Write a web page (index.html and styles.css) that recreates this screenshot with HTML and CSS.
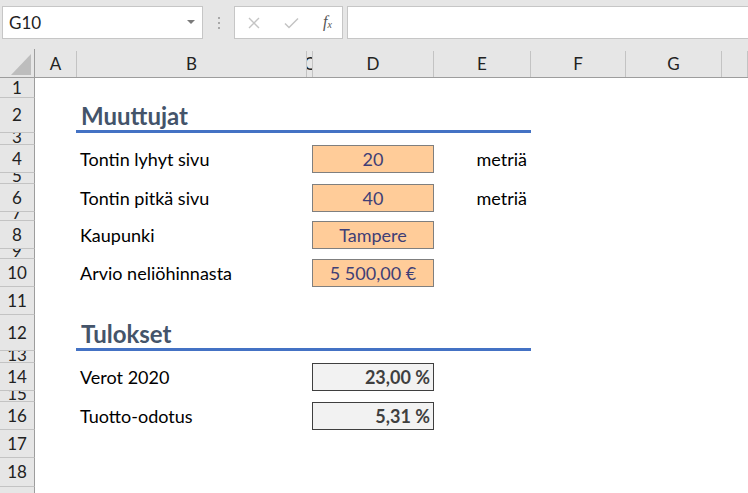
FILE: index.html
```html
<!DOCTYPE html>
<html lang="fi">
<head>
  <meta charset="UTF-8">
  <meta name="viewport" content="width=device-width, initial-scale=1.0">
  <title>Laskuri</title>
  <link rel="stylesheet" href="styles.css">
</head>
<body>
  <div class="toolbar">
    <div class="name-box">
      <span>G10</span>
      <svg class="caret" width="8" height="5" viewBox="0 0 8 5"><path d="M0 0h8L4 4z" fill="#7a7a7a"/></svg>
    </div>
    <div class="grip"><i></i><i></i><i></i></div>
    <div class="fx-buttons">
      <svg width="12" height="12" viewBox="0 0 12 12"><path d="M1 1l10 10M11 1L1 11" stroke="#c4c4c4" stroke-width="1.4"/></svg>
      <svg width="15" height="12" viewBox="0 0 15 12"><path d="M1 6.5l4 4L14 1.5" stroke="#c4c4c4" stroke-width="1.5" fill="none"/></svg>
      <span class="fx">f<sub>x</sub></span>
    </div>
    <div class="formula-input"></div>
  </div>

  <div class="sheet">
    <div class="row col-head">
      <div class="corner"><svg width="20" height="21" viewBox="0 0 20 21"><path d="M20 0v21H0z" fill="#bdbdbd"/></svg></div>
      <div class="ch">A</div><div class="ch">B</div><div class="ch">C</div><div class="ch">D</div>
      <div class="ch">E</div><div class="ch">F</div><div class="ch">G</div><div class="ch"></div>
    </div>

    <div class="row h20"><div class="rh">1</div></div>
    <div class="row h35">
      <div class="rh">2</div><div class="a"></div>
      <div class="title">Muuttujat</div>
    </div>
    <div class="row h12"><div class="rh tiny">3</div></div>
    <div class="row h28">
      <div class="rh">4</div><div class="a"></div>
      <div class="label">Tontin lyhyt sivu</div><div class="c"></div>
      <div class="input">20</div><div class="unit">metriä</div>
    </div>
    <div class="row h11"><div class="rh tiny">5</div></div>
    <div class="row h28">
      <div class="rh">6</div><div class="a"></div>
      <div class="label">Tontin pitkä sivu</div><div class="c"></div>
      <div class="input">40</div><div class="unit">metriä</div>
    </div>
    <div class="row h9"><div class="rh tiny">7</div></div>
    <div class="row h28">
      <div class="rh">8</div><div class="a"></div>
      <div class="label">Kaupunki</div><div class="c"></div>
      <div class="input">Tampere</div>
    </div>
    <div class="row h10"><div class="rh tiny">9</div></div>
    <div class="row h28">
      <div class="rh">10</div><div class="a"></div>
      <div class="label">Arvio neliöhinnasta</div><div class="c"></div>
      <div class="input">5 500,00 €</div>
    </div>
    <div class="row h28"><div class="rh">11</div></div>
    <div class="row h36">
      <div class="rh">12</div><div class="a"></div>
      <div class="title">Tulokset</div>
    </div>
    <div class="row h12"><div class="rh tiny">13</div></div>
    <div class="row h28">
      <div class="rh">14</div><div class="a"></div>
      <div class="label">Verot 2020</div><div class="c"></div>
      <div class="output">23,00 %</div>
    </div>
    <div class="row h11"><div class="rh tiny">15</div></div>
    <div class="row h28">
      <div class="rh">16</div><div class="a"></div>
      <div class="label">Tuotto-odotus</div><div class="c"></div>
      <div class="output">5,31 %</div>
    </div>
    <div class="row h28"><div class="rh">17</div></div>
    <div class="row h29"><div class="rh">18</div></div>
    <div class="row h28"><div class="rh">19</div></div>
  </div>
</body>
</html>
```

FILE: styles.css
```css
body {
  margin: 0;
  background: #fff;
  font-family: Lato, "Liberation Sans", sans-serif;
  color: #000;
  overflow: hidden;
}

.toolbar {
  height: 49px;
  background: #e6e6e6;
  display: flex;
  align-items: flex-start;
  padding-top: 6px;
  box-sizing: border-box;
}

.name-box {
  margin-left: 2px;
  width: 201px;
  height: 33px;
  box-sizing: border-box;
  background: #fff;
  border: 1px solid #c6c6c6;
  display: flex;
  align-items: center;
  justify-content: space-between;
  padding: 0 7px 1px 6px;
  font-size: 17px;
  color: #222;
}

.caret {
  margin-top: 1px;
}

.grip {
  width: 31px;
  height: 33px;
  display: flex;
  flex-direction: column;
  align-items: center;
  justify-content: center;
  gap: 3px;
}

.grip i {
  width: 2px;
  height: 2px;
  background: #a8a8a8;
}

.fx-buttons {
  width: 109px;
  height: 33px;
  box-sizing: border-box;
  background: #fff;
  border: 1px solid #c6c6c6;
  display: flex;
  align-items: center;
  padding: 0 10px 0 13px;
  justify-content: space-between;
}

.fx {
  font-family: "Liberation Serif", serif;
  font-style: italic;
  font-size: 16px;
  color: #555;
  margin-bottom: 2px;
}

.fx sub {
  font-size: 10px;
  vertical-align: -1px;
}

.formula-input {
  margin-left: 4px;
  flex: 1;
  height: 33px;
  box-sizing: border-box;
  background: #fff;
  border: 1px solid #c6c6c6;
  border-right: none;
}

.row {
  display: grid;
  grid-template-columns: 35px 42px 230px 6px 121px 97px 95px 96px 1fr;
  box-sizing: border-box;
}

.col-head {
  height: 29px;
  background: #e6e6e6;
  border-bottom: 1px solid #9d9d9d;
}

.corner {
  border-right: 1px solid #9d9d9d;
  display: flex;
  justify-content: flex-end;
  align-items: flex-end;
  padding: 0 3px 2px 0;
}

.ch {
  border-right: 1px solid #c3c3c3;
  margin-top: 2px;
  font-size: 17px;
  line-height: 26px;
  color: #222;
  overflow: hidden;
  white-space: nowrap;
  display: flex;
  justify-content: center;
}

.rh {
  background: #e6e6e6;
  border-right: 1px solid #9d9d9d;
  border-bottom: 1px solid #c3c3c3;
  font-size: 17px;
  color: #222;
  display: flex;
  align-items: center;
  justify-content: center;
  overflow: hidden;
  line-height: 20px;
}

.rh.tiny {
  align-items: flex-end;
  line-height: 14px;
}

.h9 { height: 9px; }
.h10 { height: 10px; }
.h11 { height: 11px; }
.h12 { height: 12px; }
.h20 { height: 20px; }
.h28 { height: 28px; }
.h29 { height: 29px; }
.h35 { height: 35px; }
.h36 { height: 36px; }

.title {
  grid-column: 3 / 7;
  margin-left: -1px;
  border-bottom: 3px solid #4472c4;
  color: #44546a;
  font-weight: bold;
  font-size: 24px;
  line-height: 24px;
  padding: 0 0 2px 5px;
  display: flex;
  align-items: flex-end;
}

.label {
  font-size: 18px;
  padding-left: 3px;
  display: flex;
  align-items: center;
  white-space: nowrap;
}

.input, .output {
  font-size: 18px;
  display: flex;
  align-items: center;
  box-sizing: border-box;
  margin-left: -1px;
  white-space: nowrap;
}

.input {
  background: #ffcc99;
  border: 1px solid #7f7f7f;
  color: #3f3f76;
  justify-content: center;
}

.output {
  background: #f2f2f2;
  border: 1px solid #3f3f3f;
  color: #3f3f3f;
  font-weight: bold;
  justify-content: flex-end;
  padding-right: 3px;
}

.unit {
  font-size: 18px;
  display: flex;
  align-items: center;
  justify-content: flex-end;
  padding-right: 4px;
}
```
